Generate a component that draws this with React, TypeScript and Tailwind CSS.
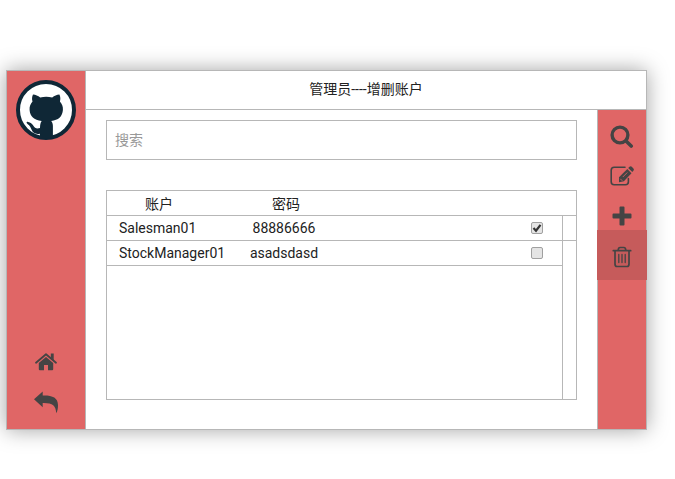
import React, { useState } from "react";

function OctocatLogo() {
  return (
    <svg viewBox="0 0 60 60" className="size-15" role="img" aria-label="GitHub">
      <circle cx="30" cy="30" r="28" fill="#ffffff" stroke="#0f2736" strokeWidth="4" />
      <path
        fill="#0f2736"
        d="M17 14.500c2.600.2 5 1.400 7.200 2.900q6-1.400 12 0c2.200-1.500 4.600-2.700 7.200-2.900 1.100 2.300 1.200 4.600.5 7 2.300 2.500 3.200 5 3 8.500-.5 6.500-4.500 10.200-11.700 11 1.100 1.300 1.700 2.900 1.700 4.800V58.500H23.900V53.700c-4.600.7-6.900-.6-8.400-4.200-.9-2.100-1.800-4-3.700-5.300-1.700-1.200-1.800-2.600.4-2.300 2.300.3 3.800 1.700 5 3.700 1.600 2.700 3.700 3.500 6.800 2.400.1-3 .4-5.400 1.700-7C17.900 40 14 36.500 13.600 30c-.2-3.500.7-6 2.900-8.500-.7-2.400-.6-4.700.5-7z"
      />
    </svg>
  );
}

function SearchIcon() {
  return (
    <svg viewBox="0 0 24 24" className="size-6" fill="none" stroke="currentColor" aria-hidden="true">
      <circle cx="10" cy="11" r="7.900" strokeWidth="3.400" />
      <path d="M16 17l5.200 5" strokeWidth="3.600" strokeLinecap="round" />
    </svg>
  );
}

function EditIcon() {
  return (
    <svg viewBox="0 0 24 24" className="size-6" fill="none" stroke="currentColor" aria-hidden="true">
      <path d="M15 3.200H4.200Q1.200 3.200 1.200 6.200v11.600q0 3 3 3h11.200q3 0 3-3V14.500" strokeWidth="1.600" strokeLinecap="round" />
      <path d="M9 18.300V13.200l8.300-8.200 4.200 4.200-7.600 8z" fill="currentColor" stroke="none" />
      <path d="M18.200 4.100l1.300-1.300q1.200-1 2.300 0l1.600 1.600q1 1.200 0 2.300l-1.100 1.400z" fill="currentColor" stroke="none" />
      <path d="M10.300 14.800l2 2M12.800 13l4.500-4.500" stroke="#e06666" strokeWidth=".8" />
    </svg>
  );
}

function PlusIcon() {
  return (
    <svg viewBox="0 0 24 24" className="size-6" fill="currentColor" aria-hidden="true">
      <path d="M10.500 2.500h3q1 0 1 1V9.500h6q1 0 1 1v3q0 1-1 1h-6v6q0 1-1 1h-3q-1 0-1-1v-6h-6q-1 0-1-1v-3q0-1 1-1h6v-6q0-1 1-1z" />
    </svg>
  );
}

function TrashIcon() {
  return (
    <svg viewBox="0 0 24 24" className="size-6" fill="none" stroke="currentColor" strokeWidth="1.700" strokeLinecap="round" aria-hidden="true">
      <path d="M3.300 5.700h17.400M8.200 5.500q0-3 2-3h3.600q2 0 2 3M5 6v13q0 2.500 2 2.500h10q2 0 2-2.500V6" />
      <path d="M8.800 9.500v8M12 9.500v8M15.200 9.500v8" strokeWidth="1.300" />
    </svg>
  );
}

function HomeIcon() {
  return (
    <svg viewBox="0 0 24 24" className="size-6" fill="currentColor" aria-hidden="true">
      <path d="M2 12.700L12 4.300 22 12.700" fill="none" stroke="currentColor" strokeWidth="1.800" strokeLinecap="round" strokeLinejoin="round" />
      <path d="M16.800 3.500h2.900v7.200l-2.900-2.400zM12 6.900l7.200 6v6.400q0 1-1 1H14v-5.300H10v5.300H5.800q-1 0-1-1v-6.400z" />
    </svg>
  );
}

function BackIcon() {
  return (
    <svg viewBox="0 0 24 24" className="size-6" fill="currentColor" aria-hidden="true">
      <path d="M0 9.300L8.700 1.500v4.100C18 5.300 24 7.500 24 15.200c0 3-.4 5.600-1.800 8.100-.3-8-3.700-10.500-13.500-10.300v4.200z" />
    </svg>
  );
}

const tools = [
  { label: "搜索", icon: SearchIcon, active: false },
  { label: "编辑", icon: EditIcon, active: false },
  { label: "添加", icon: PlusIcon, active: false },
  { label: "删除", icon: TrashIcon, active: true },
];

const initialAccounts = [
  { name: "Salesman01", password: "88886666", selected: true },
  { name: "StockManager01", password: "asadsdasd", selected: false },
];

export default function App() {
  const [accounts, setAccounts] = useState(initialAccounts);
  const toggle = (name: string) =>
    setAccounts(accounts.map((a) => (a.name === name ? { ...a, selected: !a.selected } : a)));

  return (
    <div className="min-h-screen bg-white pt-[70px] pr-7 pb-12 pl-1.5 font-[Roboto,'Noto_Sans_CJK_SC',sans-serif] text-sm text-[#222]">
      <div className="flex min-h-[360px] border border-[#b7b7b7] bg-white shadow-[0_0_20px_rgba(0,0,0,0.36)]">
        <aside className="flex w-[79px] shrink-0 flex-col items-center justify-between border-r border-[#b7b7b7] bg-[#e06666] pt-[9px] pb-[15px] text-[#444]">
          <OctocatLogo />
          <nav className="flex flex-col gap-4">
            <button aria-label="首页"><HomeIcon /></button>
            <button aria-label="返回"><BackIcon /></button>
          </nav>
        </aside>

        <div className="flex min-w-0 flex-1 flex-col">
          <header className="flex h-[39px] items-center justify-center border-b border-[#b7b7b7] pb-0.5">
            <h1>管理员----增删账户</h1>
          </header>

          <div className="flex flex-1">
            <main className="flex min-w-0 flex-1 flex-col gap-[30px] pt-2.5 pr-5 pb-[29px] pl-5">
              <input
                type="search"
                aria-label="搜索"
                placeholder="搜索"
                className="h-10 w-full border border-[#b7b7b7] px-2 outline-none placeholder:text-[#999]"
              />

              <div className="flex-1 border border-[#b7b7b7]">
                <div className="flex h-full flex-col">
                  <table className="w-full table-fixed border-separate border-spacing-0">
                    <colgroup>
                      <col className="w-[128px]" />
                      <col className="w-[100px]" />
                      <col />
                      <col className="w-[50px]" />
                      <col className="w-3.5" />
                    </colgroup>
                    <thead>
                      <tr className="h-[25px]">
                        <th className="border-b border-[#b7b7b7] p-0 pt-0.5 pr-6 font-normal">账户</th>
                        <th className="border-b border-[#b7b7b7] p-0 pt-0.5 pl-0.5 font-normal">密码</th>
                        <td colSpan={3} className="border-b border-[#b7b7b7] p-0" />
                      </tr>
                    </thead>
                    <tbody>
                      {accounts.map((a, i) => (
                        <tr key={a.name} className="h-[25px]">
                          <td className="border-b border-[#b7b7b7] p-0 pl-3">{a.name}</td>
                          <td className="border-b border-[#b7b7b7] p-0 pr-0.5 text-center">{a.password}</td>
                          <td className="border-b border-[#b7b7b7] p-0" />
                          <td className="border-b border-[#b7b7b7] p-0">
                            <span className="relative mx-auto block size-3">
                              <input
                                type="checkbox"
                                aria-label={a.name}
                                checked={a.selected}
                                onChange={() => toggle(a.name)}
                                className="block size-3 appearance-none rounded-xs border border-[#a0a0a0] bg-[#e4e4e4]"
                              />
                              {a.selected && (
                                <svg viewBox="0 0 12 12" className="pointer-events-none absolute inset-0 size-3" fill="none" stroke="#333" strokeWidth="2.200" aria-hidden="true">
                                  <path d="M2.500 6l2.500 2.700L9.500 2.800" />
                                </svg>
                              )}
                            </span>
                          </td>
                          <td className={i === 0 ? "border-b border-l border-[#b7b7b7] p-0" : "border-l border-[#b7b7b7] p-0"} />
                        </tr>
                      ))}
                    </tbody>
                  </table>
                  <div className="mr-[13px] flex-1 border-r border-[#b7b7b7]" />
                </div>
              </div>
            </main>

            <aside className="flex w-[49px] shrink-0 flex-col border-l border-[#b7b7b7] bg-[#e06666] pt-3.5 text-[#444]">
              <div className="flex flex-col items-center gap-4">
                {tools.filter((t) => !t.active).map(({ label, icon: Icon }) => (
                  <button key={label} aria-label={label}>
                    <Icon />
                  </button>
                ))}
              </div>
              {tools.filter((t) => t.active).map(({ label, icon: Icon }) => (
                <button
                  key={label}
                  aria-label={label}
                  className="-mx-px mt-0.5 flex h-[50px] items-center justify-center bg-[#c65b5b] pt-1"
                >
                  <Icon />
                </button>
              ))}
            </aside>
          </div>
        </div>
      </div>
    </div>
  );
}
